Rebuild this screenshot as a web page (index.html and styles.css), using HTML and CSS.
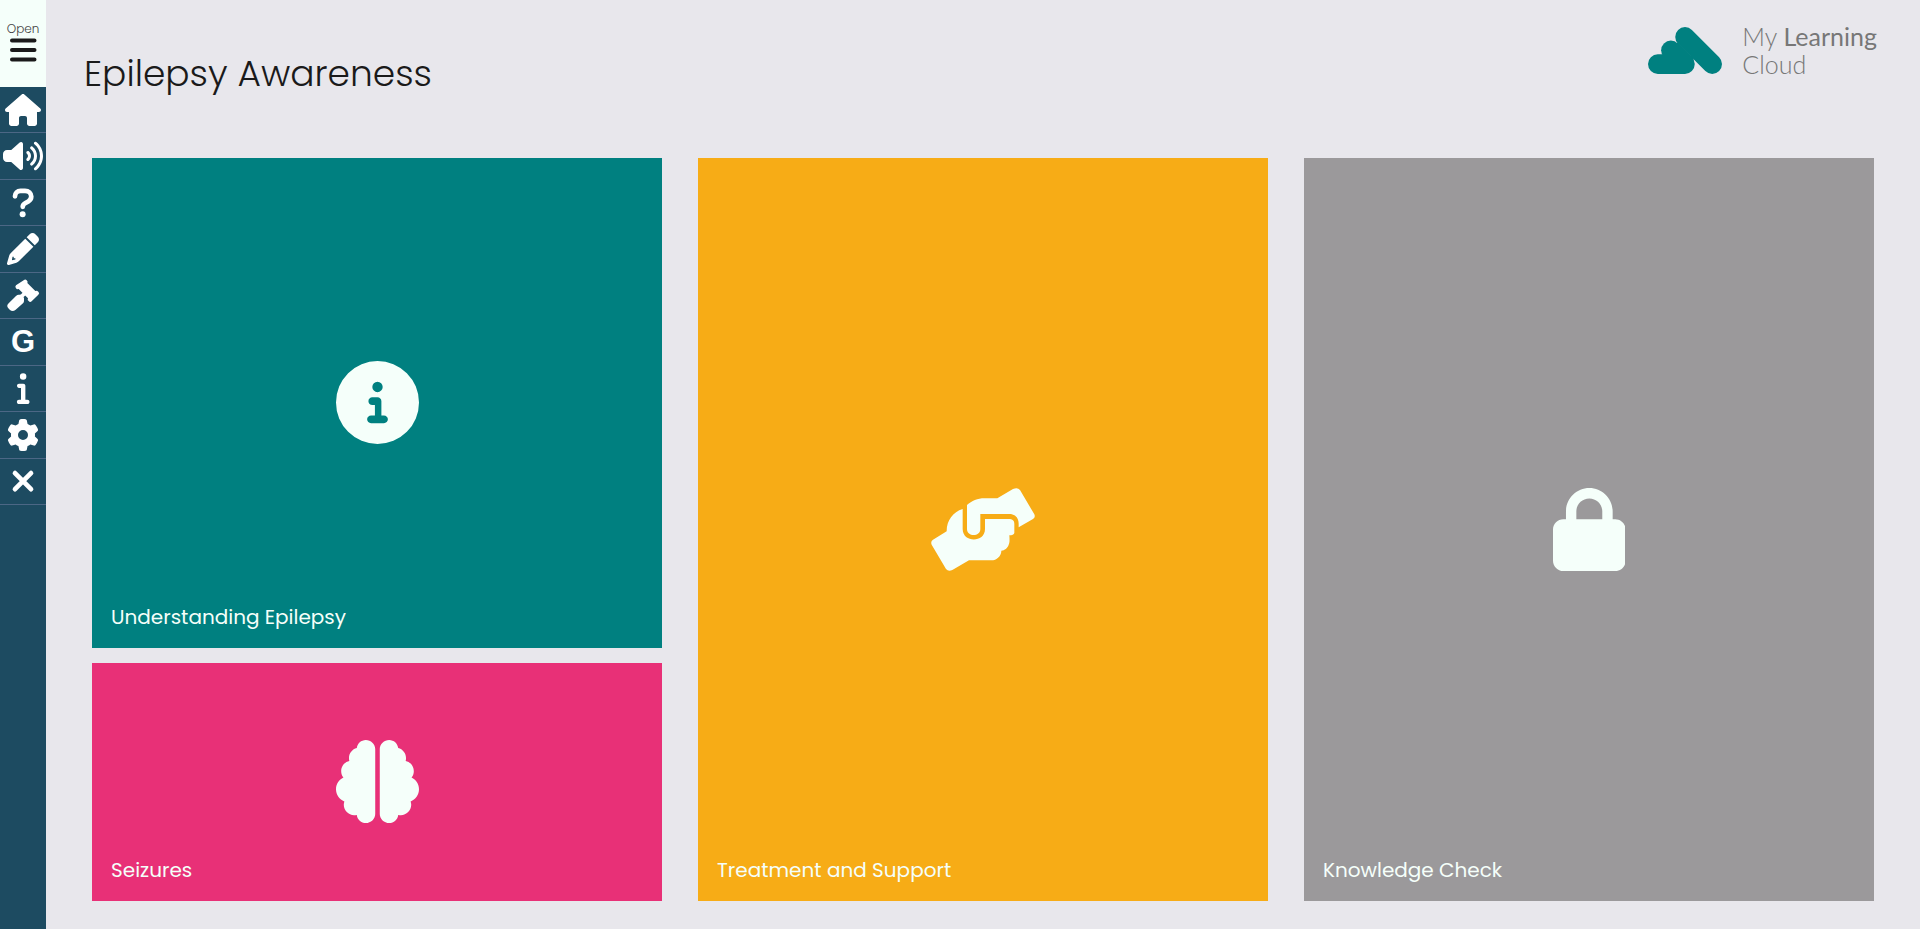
FILE: index.html
```html
<!DOCTYPE html>
<html lang="en">
<head>
<meta charset="utf-8">
<title>Epilepsy Awareness</title>
<link rel="stylesheet" href="styles.css">
</head>
<body>
<div class="page">
  <nav class="sidebar" aria-label="Course tools">
    <button class="menu-toggle" type="button">
      <span class="menu-label">Open</span>
      <svg class="menu-bars" viewBox="0 0 28 24" aria-hidden="true"><path d="M3 2.500h22.500M3 12h22.500M3 21.500h22.500"/></svg>
    </button>
    <div class="tools">
      <button class="tool" type="button" aria-label="Home"><svg class="icon" viewBox="0 0 576 512"><path d="M575.800 255.500c0 18-15 32.100-32 32.100h-32l.7 160.200c0 2.700-.2 5.400-.5 8.100V472c0 22.100-17.900 40-40 40H392c-22.100 0-40-17.900-40-40V384c0-17.700-14.300-32-32-32H256c-17.700 0-32 14.300-32 32v88c0 22.100-17.900 40-40 40H104c-22.100 0-40-17.900-40-40V287.600H32c-18 0-32-14-32-32.100c0-9 3-17 10-24L266.400 8c7-7 15-8 22-8s15 2 21 7L564.800 231.500c8 7 12 15 11 24z"/></svg></button>
      <button class="tool" type="button" aria-label="Sound"><svg class="icon" viewBox="0 0 640 512"><path d="M533.600 32.500C598.500 85.200 640 165.800 640 256s-41.500 170.700-106.400 223.500c-10.300 8.400-25.400 6.800-33.800-3.500s-6.800-25.400 3.500-33.800C557.500 398.200 592 331.200 592 256s-34.500-142.200-88.700-186.300c-10.300-8.400-11.800-23.500-3.500-33.800s23.500-11.800 33.800-3.500zM473.100 107c43.200 35.200 70.900 88.900 70.900 149s-27.700 113.800-70.900 149c-10.300 8.400-25.400 6.800-33.800-3.500s-6.800-25.400 3.500-33.800C475.300 341.300 496 301.100 496 256s-20.700-85.300-53.200-111.800c-10.300-8.400-11.800-23.500-3.500-33.800s23.500-11.800 33.800-3.500zm-60.500 74.500C434.100 199.100 448 225.900 448 256s-13.900 56.900-35.400 74.500c-10.300 8.400-25.400 6.800-33.800-3.500s-6.800-25.400 3.500-33.800C393.100 284.400 400 271 400 256s-6.900-28.400-17.700-37.300c-10.300-8.400-11.800-23.500-3.500-33.800s23.500-11.800 33.800-3.500zM301.100 34.800C312.600 40 320 51.400 320 64V448c0 12.600-7.400 24-18.900 29.200s-25 3.100-34.400-5.300L131.800 352H64c-35.300 0-64-28.700-64-64V224c0-35.300 28.700-64 64-64h67.800L266.700 40.100c9.400-8.400 22.900-10.400 34.400-5.300z"/></svg></button>
      <button class="tool" type="button" aria-label="Help"><svg class="icon" viewBox="0 0 320 512"><path class="icon-stroke" d="M32 148c0-50 38-88 88-88h72c58 0 100 40 100 92 0 38-20 62-48 79l-44 26c-30 17-44 32-44 59"/><circle cx="154" cy="434" r="48"/></svg></button>
      <button class="tool" type="button" aria-label="Notes"><svg class="icon" viewBox="0 0 512 512"><path fill-rule="evenodd" d="M292 90 422 220 188 453c-10 10-23 18-37 22L31 510.500c-18 6-36-12-30-30L36 360c4-14 12-27 22-37zM88 380 78 434 134 424V404H108V380zM363 18.700c25-25 65.500-25 90.500 0L493 59c25 25 25 65.500 0 90.500L444 197 314 67z"/></svg></button>
      <button class="tool" type="button" aria-label="Legislation"><svg class="icon" viewBox="22 58 98 96"><path d="M72 62q5-5 9 0l3 4-1 4 24 24 5-1 4 3q5 5 0 9L96 125q-5 4-9-1l-3-3 1-5-28-28-5 1-3-3q-4-4 0-9z"/><path class="gavel-neck" d="M78 98 62 114"/><path d="M60 105q2-2 5 1l6 6q3 3 2 6v6q0 4-3 7L48 150q-9 8-17 1l-5-5q-7-8 1-15l22-22q4-4 8-4z"/></svg></button>
      <button class="tool tool-letter" type="button" aria-label="Glossary">G</button>
      <button class="tool" type="button" aria-label="Information"><svg class="icon" viewBox="0 0 192 512"><path d="M46 72a52 52 0 1 1 104 0A52 52 0 1 1 46 72zM0 220c0-19 14-34 32-34H100c19 0 34 14 34 34V444h32c19 0 34 15 34 34s-15 34-34 34H32c-19 0-34-15-34-34s15-34 34-34H64V254H32c-18 0-32-15-32-34z"/></svg></button>
      <button class="tool" type="button" aria-label="Settings"><svg class="icon" viewBox="0 0 512 512"><path d="M495.900 166.600c3.200 8.700 .5 18.400-6.400 24.600l-43.300 39.400c1.100 8.300 1.700 16.800 1.700 25.400s-.6 17.100-1.700 25.400l43.300 39.400c6.900 6.200 9.600 15.900 6.400 24.600c-4.400 11.900-9.700 23.300-15.800 34.300l-4.700 8.100c-6.600 11-14 21.400-22.100 31.200c-5.900 7.200-15.700 9.600-24.500 6.800l-55.700-17.700c-13.400 10.300-28.200 18.900-44 25.400l-12.500 57.100c-2 9.100-9 16.300-18.200 17.800c-13.800 2.300-28 3.500-42.500 3.500s-28.700-1.200-42.500-3.500c-9.200-1.500-16.200-8.700-18.200-17.800l-12.500-57.100c-15.800-6.500-30.600-15.100-44-25.400L83.100 425.900c-8.800 2.800-18.600 .3-24.500-6.800c-8.100-9.800-15.500-20.200-22.100-31.200l-4.700-8.100c-6.100-11-11.400-22.400-15.800-34.300c-3.200-8.700-.5-18.400 6.400-24.600l43.300-39.400C64.600 273.100 64 264.600 64 256s.6-17.100 1.700-25.400L22.400 191.200c-6.900-6.200-9.600-15.900-6.400-24.600c4.400-11.900 9.700-23.300 15.800-34.300l4.700-8.100c6.600-11 14-21.400 22.100-31.200c5.900-7.200 15.700-9.600 24.500-6.800l55.700 17.700c13.400-10.300 28.200-18.900 44-25.400l12.500-57.100c2-9.100 9-16.300 18.200-17.800C227.300 1.200 241.500 0 256 0s28.700 1.200 42.500 3.500c9.200 1.500 16.200 8.700 18.200 17.800l12.500 57.100c15.800 6.500 30.600 15.100 44 25.400l55.700-17.700c8.800-2.800 18.600-.3 24.500 6.800c8.100 9.800 15.500 20.200 22.100 31.200l4.700 8.100c6.100 11 11.400 22.400 15.800 34.300zM256 336a80 80 0 1 0 0-160 80 80 0 1 0 0 160z"/></svg></button>
      <button class="tool" type="button" aria-label="Close"><svg class="icon" viewBox="0 0 320 512"><path class="icon-stroke" d="M32 130 288 386M288 130 32 386"/></svg></button>
    </div>
  </nav>

  <main class="content">
    <header class="header">
      <h1 class="title">Epilepsy Awareness</h1>
      <div class="brand">
        <svg class="brand-mark" viewBox="57 53 220 139" aria-hidden="true">
          <path class="brand-line" d="M167 82 248 163M86 163H167"/>
          <circle cx="125" cy="122" r="29"/>
          <path d="M100 140 145 98 193 147 180 170H90z"/>
        </svg>
        <p class="brand-name">My <span class="brand-strong">Learning</span><br>Cloud</p>
      </div>
    </header>

    <div class="cards">
      <a class="card card-teal" href="#understanding">
        <svg class="card-icon" viewBox="0 0 512 512" aria-hidden="true"><path d="M256 512A256 256 0 1 0 256 0a256 256 0 1 0 0 512zM216 336h24V272H224c-13.300 0-24-10.700-24-24s10.700-24 24-24h32c13.300 0 24 10.700 24 24v88h16c13.300 0 24 10.700 24 24s-10.700 24-24 24H216c-13.300 0-24-10.700-24-24s10.700-24 24-24zm40-208a32 32 0 1 1 0 64 32 32 0 1 1 0-64z"/></svg>
        <span class="card-label">Understanding Epilepsy</span>
      </a>
      <a class="card card-pink" href="#seizures">
        <svg class="card-icon" viewBox="0 0 512 512" aria-hidden="true"><path d="M184 0c30.900 0 58 25.100 58 56V456c0 30.900-27.100 56-58 56c-28.900 0-52.700-21.900-55.700-50.100c-5.200 1.400-10.700 2.100-16.300 2.100c-35.300 0-64-28.700-64-64c0-7.400 1.300-14.600 3.600-21.200C21.400 367.400 0 338.200 0 304c0-31.900 18.700-59.500 45.800-72.300C37.100 220.800 32 207 32 192c0-30.700 21.600-56.300 50.400-62.600C80.800 123.900 80 118 80 112c0-29.900 20.600-55.100 48.300-62.100C131.300 21.900 155.100 0 184 0zM328 0c28.900 0 52.600 21.900 55.700 49.900c27.800 7 48.300 32.100 48.300 62.100c0 6-.8 11.900-2.400 17.400c28.800 6.200 50.400 31.900 50.400 62.600c0 15-5.100 28.800-13.800 39.700C493.300 244.500 512 272.100 512 304c0 34.200-21.400 63.400-51.600 74.800c2.300 6.600 3.600 13.800 3.600 21.200c0 35.300-28.700 64-64 64c-5.600 0-11.100-.7-16.300-2.100c-3 28.200-26.800 50.100-55.700 50.100c-30.900 0-58-25.100-58-56V56c0-30.900 27.100-56 58-56z"/></svg>
        <span class="card-label">Seizures</span>
      </a>
      <a class="card card-orange card-tall" href="#treatment">
        <svg class="card-icon" viewBox="64 53 312 249" aria-hidden="true"><path d="M263 84 310 56q14-6 21 3L374 132q4 9-4 14L327 171V160c0-16-9-29-28-29H212V176c0 24-40 24-40 0V104C186 92 204 84 224 84zM159 116V176c0 42 67 42 67 0V146H301q13 2 13 14V188q-2 7-15 7c1 14 1 22-2 28c-3 10-12 17-22 18c0 16-14 29-30 29H178L128 299q-12 6-19-3L66 223q-4-10 4-15L111 183C111 150 130 125 159 116z"/></svg>
        <span class="card-label">Treatment and Support</span>
      </a>
      <a class="card card-gray card-tall" href="#knowledge">
        <svg class="card-icon" viewBox="0 0 448 512" aria-hidden="true"><path d="M144 144v48H304V144c0-44.200-35.800-80-80-80s-80 35.800-80 80zM80 192V144C80 64.500 144.500 0 224 0s144 64.500 144 144v48h16c35.300 0 64 28.700 64 64V448c0 35.300-28.700 64-64 64H64c-35.300 0-64-28.700-64-64V256c0-35.300 28.700-64 64-64H80z"/></svg>
        <span class="card-label">Knowledge Check</span>
      </a>
    </div>
  </main>
</div>
</body>
</html>
```
FILE: styles.css
```css
* {
  box-sizing: border-box;
}

body {
  margin: 0;
  background: #e8e7ec;
  color: #1a1a1a;
  font-family: Poppins, Inter, "Open Sans", sans-serif;
  font-weight: 300;
}

.page {
  display: flex;
  min-height: 100vh;
}

.sidebar {
  flex: none;
  width: 46px;
  background: #1d4b61;
}

.menu-toggle {
  display: flex;
  flex-direction: column;
  align-items: center;
  width: 100%;
  height: 87px;
  padding: 20px 0 0;
  border: 0;
  background: #f5fffa;
  color: #1a1a1a;
  font: inherit;
}

.menu-label {
  color: #444;
  font-size: 12px;
  font-weight: 300;
  line-height: 18px;
}

.menu-bars {
  width: 28px;
  height: 24px;
  fill: none;
  stroke: currentColor;
  stroke-width: 4;
  stroke-linecap: round;
}

.tools {
  display: grid;
  grid-auto-rows: 1fr;
  height: 418px;
}

.tool {
  display: flex;
  align-items: center;
  justify-content: center;
  width: 100%;
  padding: 0;
  border: 0;
  border-bottom: 1px solid #4c6785;
  background: none;
  color: #fff;
}

.tool-letter {
  font: bold 31px/1 "Liberation Sans", Arial, sans-serif;
}

.icon {
  height: 32px;
  overflow: visible;
  fill: currentColor;
}

.icon-stroke {
  fill: none;
  stroke: currentColor;
  stroke-width: 76;
  stroke-linecap: round;
}

.gavel-neck {
  stroke: currentColor;
  stroke-width: 11;
}

.content {
  display: flex;
  flex: 1;
  flex-direction: column;
  padding: 0 46px 28px;
}

.header {
  display: flex;
  align-items: flex-start;
  justify-content: space-between;
  height: 158px;
}

.title {
  margin: 0 -8px;
  padding-top: 46px;
  font-size: 36px;
  font-weight: 300;
  line-height: 56px;
}

.brand {
  display: flex;
  align-items: flex-start;
  gap: 20px;
  margin-right: -3px;
  padding-top: 22px;
}

.brand-mark {
  width: 74px;
  height: 47px;
  margin-top: 5px;
  fill: #008080;
}

.brand-line {
  fill: none;
  stroke: #008080;
  stroke-width: 58;
  stroke-linecap: round;
}

.brand-name {
  margin: 0;
  color: #777;
  font-family: Lato, sans-serif;
  font-size: 25px;
  font-weight: 300;
  line-height: 28px;
}

.brand-strong {
  font-weight: 400;
}

.cards {
  display: grid;
  flex: 1;
  grid-template-columns: repeat(3, 1fr);
  grid-template-rows: 490fr 238fr;
  grid-auto-flow: column;
  gap: 15px 36px;
}

.card {
  display: grid;
  position: relative;
  place-items: center;
  padding-bottom: 2px;
  color: #f5fffa;
  text-decoration: none;
}

.card-tall {
  grid-row: span 2;
  padding-bottom: 0;
}

.card-teal {
  background: #008080;
}

.card-pink {
  background: #e83077;
}

.card-orange {
  background: #f7ac16;
}

.card-gray {
  background: #9b999b;
}

.card-icon {
  height: 83px;
  fill: currentColor;
}

.card-label {
  position: absolute;
  bottom: 16px;
  left: 19px;
  font-size: 20px;
  font-weight: 400;
  line-height: 30px;
}
```
